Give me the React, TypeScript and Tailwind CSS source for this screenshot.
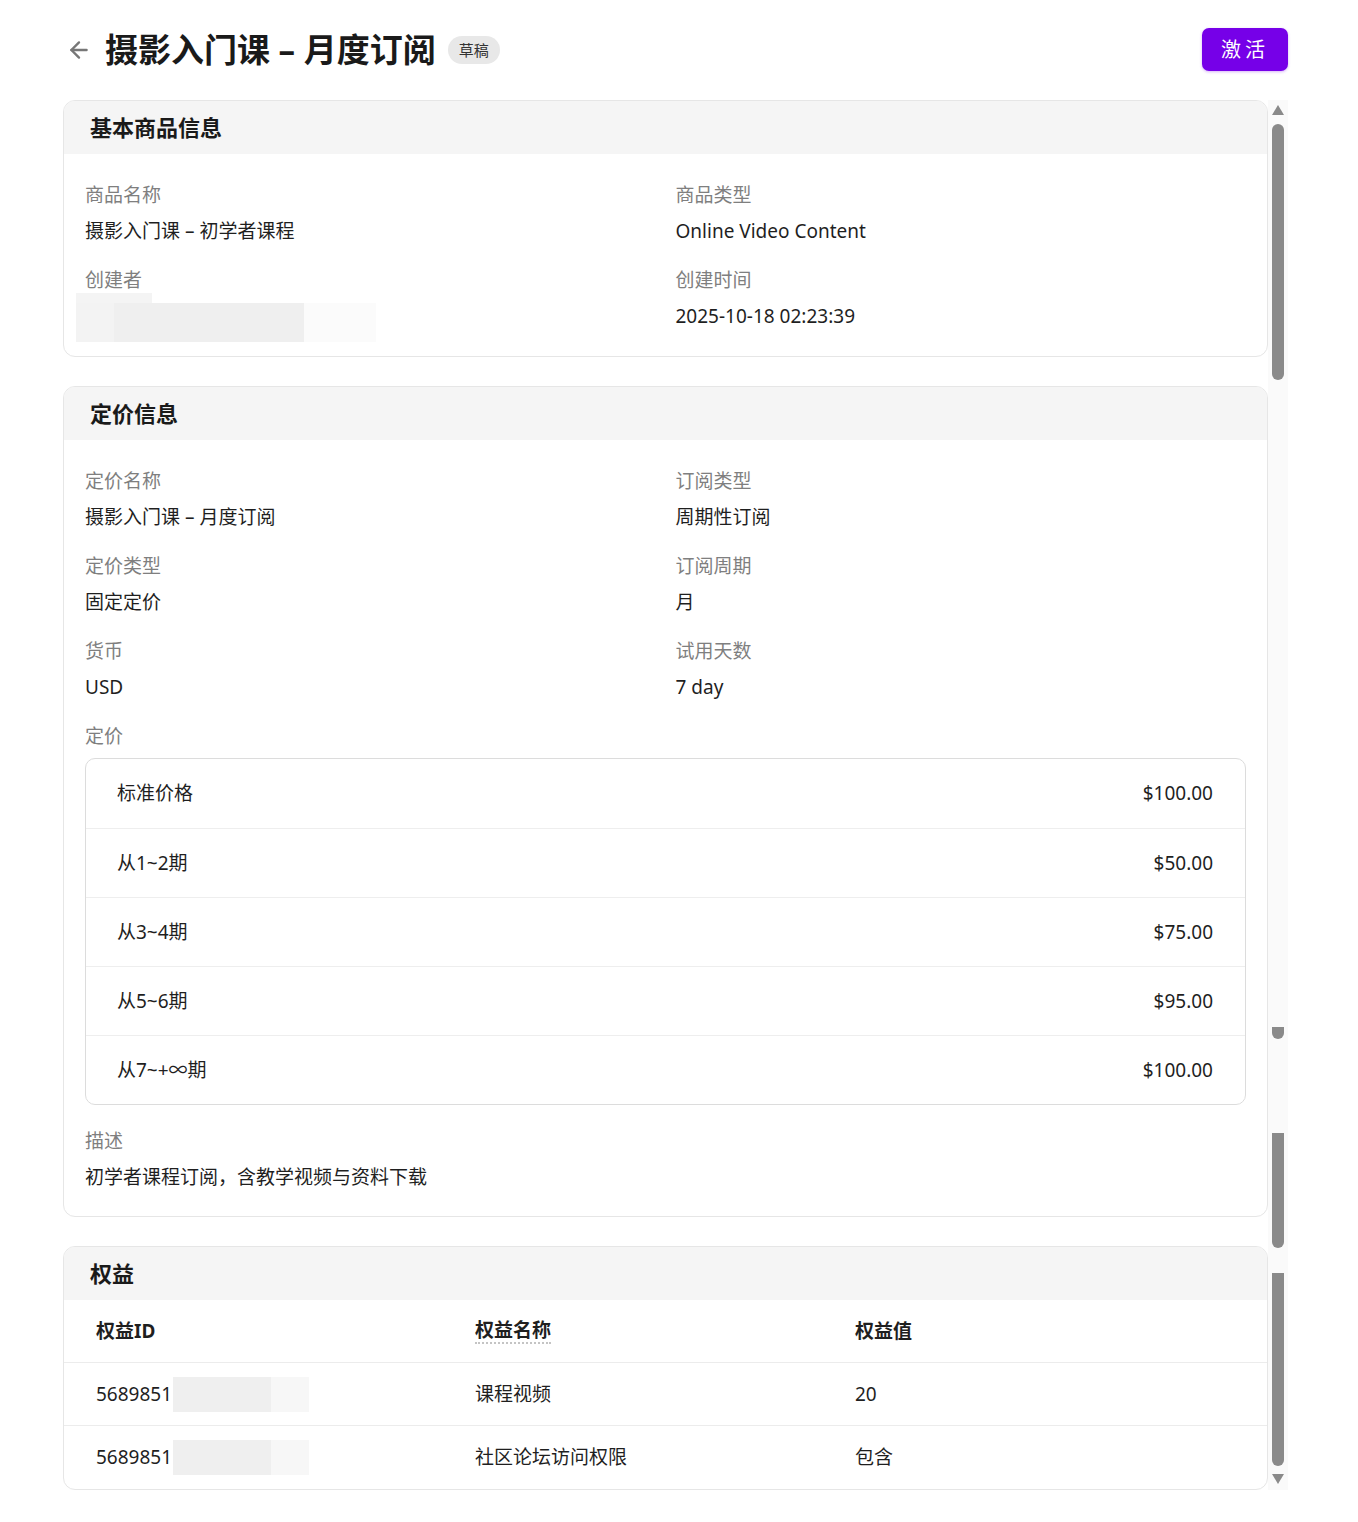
import { ArrowLeft } from 'lucide-react';

const font = "font-['Noto_Sans','Noto_Sans_CJK_SC',sans-serif]";

type FieldProps = { label: string; children: React.ReactNode };

function Field({ label, children }: FieldProps) {
  return (
    <div className="flex flex-col gap-[10px]">
      <div className="text-[19px] leading-[26px] text-[#7f7f7f]">{label}</div>
      <div className="text-[19px] leading-[26px] text-[#1f1f1f]">{children}</div>
    </div>
  );
}

function Card({ title, children }: { title: string; children: React.ReactNode }) {
  return (
    <section className="overflow-hidden rounded-[12px] border border-[#e6e6e6] bg-white">
      <h2 className="h-[53px] bg-[#f5f5f5] pl-[26px] text-[22px] font-bold leading-[53px] text-[#1a1a1a]">
        {title}
      </h2>
      {children}
    </section>
  );
}

const tiers = [
  { name: '标准价格', price: '$100.00' },
  { name: '从1~2期', price: '$50.00' },
  { name: '从3~4期', price: '$75.00' },
  { name: '从5~6期', price: '$95.00' },
  { name: '从7~+∞期', price: '$100.00' },
];

const benefits = [
  { id: '5689851', name: '课程视频', value: '20' },
  { id: '5689851', name: '社区论坛访问权限', value: '包含' },
];

function Blurred() {
  return (
    <span className="ml-px inline-flex h-[35px] w-[136px] align-middle">
      <span className="h-full w-[98px] bg-[#efefef]" />
      <span className="h-full w-[38px] bg-[#f7f7f7]" />
    </span>
  );
}

function Scrollbar() {
  return (
    <div className="flex w-[20px] shrink-0 flex-col items-center bg-[#fafafa] pt-[5px]">
      <svg width="12" height="10" viewBox="0 0 12 10">
        <polygon points="6,0 12,10 0,10" fill="#8a8a8a" />
      </svg>
      <div className="mt-[9px] h-[256px] w-[12px] rounded-full bg-[#8a8a8a]" />
      <div className="mt-[647px] h-[12px] w-[12px] rounded-b-full bg-[#8a8a8a]" />
      <div className="mt-[94px] h-[115px] w-[12px] rounded-b-full bg-[#8a8a8a]" />
      <div className="mt-[25px] h-[193px] w-[12px] rounded-b-full bg-[#8a8a8a]" />
      <svg className="mt-[8px]" width="12" height="10" viewBox="0 0 12 10">
        <polygon points="0,0 12,0 6,10" fill="#8a8a8a" />
      </svg>
    </div>
  );
}

export default function App() {
  return (
    <div className={`${font} min-h-[1522px] bg-white pl-[63px] pr-[70px] pt-[28px]`}>
      <div className="flex h-[43px] items-center justify-between">
        <div className="flex items-center">
          <ArrowLeft className="ml-[3px] text-[#777777]" size={26} strokeWidth={2.2} />
          <h1 className="ml-[13px] text-[33px] font-bold leading-[42px] text-[#1a1a1a]">
            摄影入门课 – 月度订阅
          </h1>
          <span className="ml-[12px] rounded-full bg-[#e8e8e8] px-[11px] text-[15px] leading-[28px] text-[#333333]">
            草稿
          </span>
        </div>
        <button className="h-[43px] w-[86px] rounded-[7px] bg-[#7600e8] text-[20px] tracking-[4px] text-white shadow-[0_1px_3px_rgba(118,0,232,0.3)]">
          激活
        </button>
      </div>

      <div className="mt-[29px] flex">
        <div className="flex min-w-0 flex-1 flex-col gap-[29px]">
          <Card title="基本商品信息">
            <div className="grid grid-cols-2 gap-x-[20px] gap-y-[23px] px-[21px] pb-[27px] pt-[28px]">
              <Field label="商品名称">摄影入门课 – 初学者课程</Field>
              <Field label="商品类型">Online Video Content</Field>
              <div className="flex flex-col gap-[10px]">
                <div className="text-[19px] leading-[26px] text-[#7f7f7f]">创建者</div>
                <div className="-mb-[14px] -ml-[9px] -mt-[10px] flex h-[49px] flex-col">
                  <div className="h-[10px] w-[76px] bg-[#f4f4f4]" />
                  <div className="flex h-[39px]">
                    <div className="w-[38px] bg-[#f3f3f3]" />
                    <div className="w-[190px] bg-[#efefef]" />
                    <div className="w-[72px] bg-[#fbfbfb]" />
                  </div>
                </div>
              </div>
              <Field label="创建时间">2025-10-18 02:23:39</Field>
            </div>
          </Card>

          <Card title="定价信息">
            <div className="px-[21px] pb-[26px] pt-[28px]">
              <div className="grid grid-cols-2 gap-x-[20px] gap-y-[23px]">
                <Field label="定价名称">摄影入门课 – 月度订阅</Field>
                <Field label="订阅类型">周期性订阅</Field>
                <Field label="定价类型">固定定价</Field>
                <Field label="订阅周期">月</Field>
                <Field label="货币">USD</Field>
                <Field label="试用天数">7 day</Field>
              </div>
              <div className="mt-[23px] text-[19px] leading-[26px] text-[#7f7f7f]">定价</div>
              <div className="mt-[9px] overflow-hidden rounded-[10px] border border-[#dcdcdc]">
                {tiers.map((t, i) => (
                  <div
                    key={i}
                    className={`flex h-[69px] items-center justify-between pl-[31px] pr-[32px] text-[19px] text-[#1f1f1f] ${
                      i > 0 ? 'border-t border-[#eeeeee]' : ''
                    }`}
                  >
                    <span>{t.name}</span>
                    <span>{t.price}</span>
                  </div>
                ))}
              </div>
              <div className="mt-[23px]">
                <Field label="描述">初学者课程订阅，含教学视频与资料下载</Field>
              </div>
            </div>
          </Card>

          <Card title="权益">
            <div className="grid grid-cols-[379px_380px_1fr] text-[19px] text-[#1f1f1f]">
              <div className="flex h-[63px] items-center border-b border-[#ececec] px-[32px] font-bold">
                权益ID
              </div>
              <div className="flex h-[63px] items-center border-b border-[#ececec] px-[32px] font-bold">
                <span className="border-b-2 border-dotted border-[#c4c4c4] leading-[24px]">权益名称</span>
              </div>
              <div className="flex h-[63px] items-center border-b border-[#ececec] px-[32px] font-bold">
                权益值
              </div>
              {benefits.map((b, i) => (
                <div key={i} className="contents">
                  <div
                    className={`flex h-[63px] items-center px-[32px] ${
                      i < benefits.length - 1 ? 'border-b border-[#ececec]' : ''
                    }`}
                  >
                    <span>{b.id}</span>
                    <Blurred />
                  </div>
                  <div
                    className={`flex h-[63px] items-center px-[32px] ${
                      i < benefits.length - 1 ? 'border-b border-[#ececec]' : ''
                    }`}
                  >
                    {b.name}
                  </div>
                  <div
                    className={`flex h-[63px] items-center px-[32px] ${
                      i < benefits.length - 1 ? 'border-b border-[#ececec]' : ''
                    }`}
                  >
                    {b.value}
                  </div>
                </div>
              ))}
            </div>
          </Card>
        </div>
        <Scrollbar />
      </div>
    </div>
  );
}
